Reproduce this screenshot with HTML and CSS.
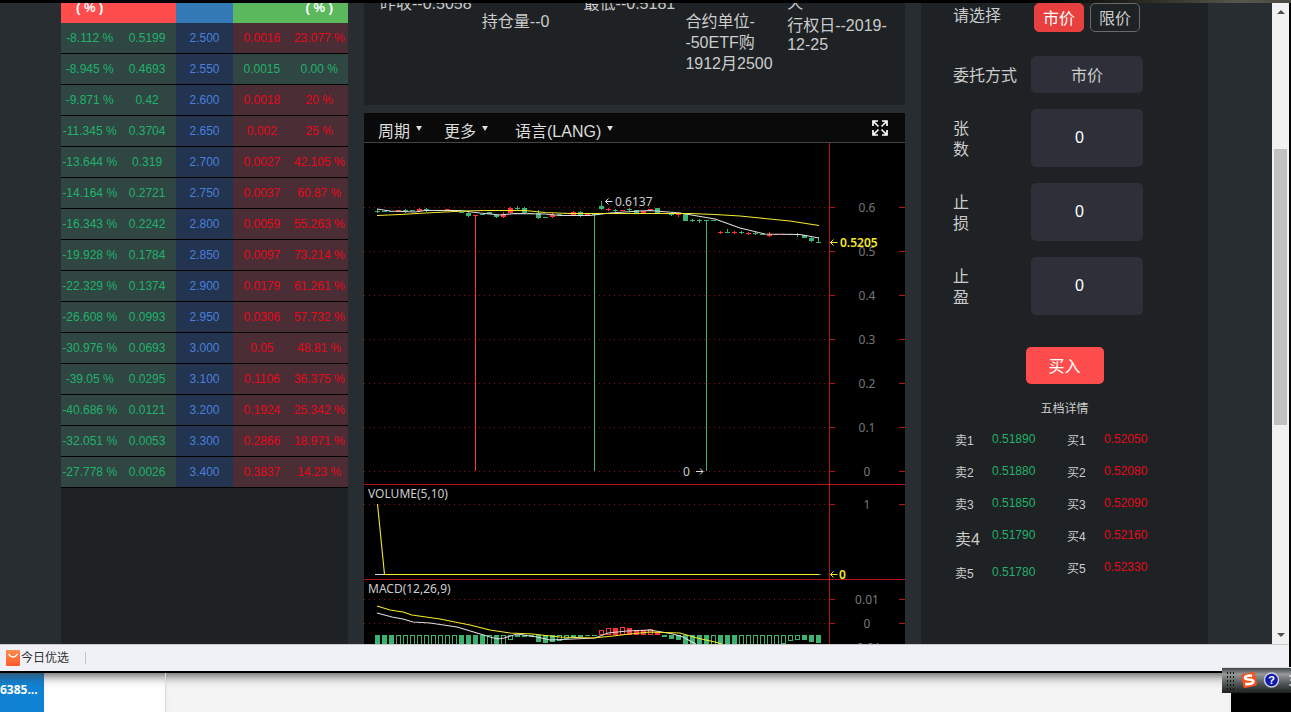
FILE: index.html
```html
<!DOCTYPE html>
<html lang="zh-CN">
<head>
<meta charset="utf-8">
<title>50ETF 期权</title>
<link rel="stylesheet" href="styles.css">
</head>
<body>
<div class="edge"></div>
<div class="window">
  <div class="viewport">
    <main class="page">
      <section class="panel">
        <table class="options">
          <thead><tr><th class="call">( % )</th><th class="call"></th><th class="strike"></th><th class="put"></th><th class="put">( % )</th></tr></thead>
          <tbody id="options"></tbody>
        </table>
      </section>

      <div class="center">
        <section class="panel quote">
          <div class="quote-col high">昨收--0.5058</div>
          <div class="quote-col">持仓量--0</div>
          <div class="quote-col high">最低--0.5181</div>
          <div class="quote-col">合约单位-<br>-50ETF购<br>1912月2500</div>
          <div class="quote-col expiry"><span>天</span><span>行权日--2019-<br>12-25</span></div>
        </section>
        <section class="chart">
          <div class="toolbar">
            <button type="button">周期<i class="caret"></i></button>
            <button type="button">更多<i class="caret"></i></button>
            <button type="button">语言(LANG)<i class="caret"></i></button>
            <button type="button" class="expand" aria-label="全屏">
              <svg viewBox="0 0 16 16" width="16" height="16"><path d="M1 6V1h5M10 1h5v5M1 10v5h5M10 15h5v-5M1.500 1.500l5 5M14.500 1.500l-5 5M1.500 14.500l5-5M14.500 14.500l-5-5" fill="none" stroke="#fff" stroke-width="1.700"/></svg>
            </button>
          </div>
          <svg class="plot" id="plot" viewBox="364 143 541 501"></svg>
        </section>
      </div>

      <form class="panel order">
        <div class="field first">
          <span class="name">请选择</span>
          <div class="modes"><button type="button" class="mode active">市价</button><button type="button" class="mode">限价</button></div>
        </div>
        <div class="field"><label class="name" for="way">委托方式</label><select class="box" id="way"><option>市价</option></select></div>
        <div class="field"><label class="name" for="qty">张<br>数</label><input class="box tall" id="qty" type="text" value="0"></div>
        <div class="field"><label class="name" for="stop">止<br>损</label><input class="box tall" id="stop" type="text" value="0"></div>
        <div class="field"><label class="name" for="gain">止<br>盈</label><input class="box tall" id="gain" type="text" value="0"></div>
        <button type="button" class="buy">买入</button>
        <div class="depth-title">五档详情</div>
        <div class="depth">
          <ul class="sell">
            <li><span>卖1</span><b>0.51890</b></li><li><span>卖2</span><b>0.51880</b></li><li><span>卖3</span><b>0.51850</b></li><li class="big"><span>卖4</span><b>0.51790</b></li><li><span>卖5</span><b>0.51780</b></li>
          </ul>
          <ul class="bid">
            <li><span>买1</span><b>0.52050</b></li><li><span>买2</span><b>0.52080</b></li><li><span>买3</span><b>0.52090</b></li><li><span>买4</span><b>0.52160</b></li><li><span>买5</span><b>0.52330</b></li>
          </ul>
        </div>
      </form>
    </main>
    <div class="scrollbar">
      <i class="arrow up"></i><div class="track"><div class="thumb"></div></div><i class="arrow down"></i>
    </div>
  </div>
  <footer class="status">
    <svg width="14" height="16" viewBox="0 0 14 16"><defs><linearGradient id="bag" x2="0" y2="1"><stop stop-color="#ff8a4c"/><stop offset="1" stop-color="#ff5a2a"/></linearGradient></defs><rect width="14" height="16" rx="1" fill="url(#bag)"/><path d="M2.500 4Q7 10 11.500 4" fill="none" stroke="#fff" stroke-width="1.300"/></svg>
    <a href="#">今日优选</a><i class="divider"></i>
  </footer>
</div>
<div class="desktop">
  <div class="task">6385...</div><div class="blank"></div><div class="rest"></div><div class="dark"></div>
</div>
<div class="ime">
  <svg width="69" height="26" viewBox="0 0 69 26">
    <g id="grip" fill="#111"></g>
    <g transform="rotate(-12 27 12)"><rect x="20" y="5" width="14" height="14" rx="2" fill="#f4511e"/><path d="M31 8.500C27 7 23.500 7.500 23.500 9.500S31 11.500 31 14S26 16.500 22.500 15" fill="none" stroke="#fff" stroke-width="2.600"/></g>
    <circle cx="49.500" cy="12" r="7" fill="#1018b0" stroke="#c8ccd8" stroke-width="1.500"/>
    <text x="49.500" y="16" text-anchor="middle" class="help">?</text>
    <path d="M67 8h2M68 12h1M67 17h2" stroke="#fff"/>
  </svg>
</div>
<script src="app.js"></script>
</body>
</html>
```

FILE: styles.css
```css
* { box-sizing: border-box; }
body {
  margin: 0; height: 100vh; display: flex; flex-direction: column; overflow: hidden;
  background: #000; color: #ccc;
  font: 16px/21px "Liberation Sans", "Noto Sans CJK SC", sans-serif;
}
button, input, select { font: inherit; color: inherit; border: 0; padding: 0; margin: 0; background: none; }
.edge { height: 3px; flex: none; background: linear-gradient(90deg, #000 80%, #26261f 88%, #55564c 96%, #4a4a42); }
.window {
  flex: 1; min-height: 0; display: flex; flex-direction: column;
  border-right: 2px solid #000; border-bottom: 2px solid #000;
}
.viewport { flex: 1; min-height: 0; display: flex; overflow: hidden; background: #282d31; }
.page {
  flex: 1; min-width: 0; display: grid; grid-template-columns: 287fr 541fr 287fr; gap: 16px;
  padding: 0 64px 0 61px; overflow: hidden;
}
.panel { background: #1e2224; min-width: 0; overflow: hidden; }

.options { width: 100%; table-layout: fixed; border-spacing: 0; margin-top: -10px; font-size: 12px; line-height: 16px; }
.options th, .options td { padding: 0; text-align: center; white-space: nowrap; }
.options th { height: 30px; color: #fff; font-size: 13px; }
.options td { height: 31px; border-bottom: 1px solid #000; }
th.call { background: #ff4d4d; }
th.strike { background: #337ab7; }
th.put { background: #5cb85c; }
td.down { background: #304642; color: #21b16c; }
td.up { background: #4a2d35; color: #e6091b; }
td.strike { background: #22344f; color: #4b7fdd; }

.center { display: flex; flex-direction: column; gap: 8px; min-width: 0; min-height: 0; }
.quote { display: grid; grid-template-columns: repeat(5, 1fr); padding: 0 16px; height: 102px; flex: none; }
.quote-col { padding-top: 8px; white-space: nowrap; }
.quote-col.high { margin-top: -18px; }
.quote-col.expiry { margin-top: -18px; display: flex; flex-direction: column; gap: 4px; line-height: 19px; }
.chart { flex: 1; min-height: 0; display: flex; flex-direction: column; background: #000; overflow: hidden; }
.toolbar { flex: none; display: flex; gap: 22px; padding: 0 17px 0 14px; height: 30px; background: #0a0a0a; border-bottom: 1px solid #444; color: #ddd; }
.toolbar button { display: flex; align-items: center; gap: 6px; padding-top: 8px; }
.toolbar button:nth-child(3) { margin-left: 5px; }
.toolbar .expand { margin-left: auto; padding: 0; }
.caret { border: 3px solid transparent; border-top: 5px solid #ddd; border-bottom: 0; margin-bottom: 6px; }
.plot { display: block; width: 100%; flex: none; font: 12px "Noto Sans", sans-serif; }
.plot text { fill: #ccc; }
.plot .scale { fill: #777; text-anchor: middle; }
.plot .mark { fill: #f4e92c; font-weight: 600; }

.order { padding: 0 32px; display: flex; flex-direction: column; gap: 16px; }
.field { display: flex; align-items: center; }
.field.first { align-items: flex-start; margin-bottom: 8px; }
.name { width: 78px; flex: none; padding-top: 2px; }
.modes { display: flex; gap: 6px; padding-left: 3px; }
.mode { width: 50px; height: 29px; border: 1px solid #666b6e; border-radius: 5px; padding-top: 2px; }
.mode.active { background: #e8403f; border-color: #e8403f; color: #fff; }
.box { width: 112px; height: 37px; border-radius: 5px; background: #2d3039; text-align: center; }
select.box { appearance: none; text-align-last: center; padding-top: 2px; }
.box.tall { height: 58px; padding-right: 15px; color: #fff; }
.buy { align-self: center; width: 78px; height: 37px; margin-top: 16px; padding-top: 2px; border-radius: 5px; background: #ff4d4d; color: #fff; }
.depth-title { align-self: center; font-size: 12px; line-height: 18px; }
.depth { display: flex; gap: 30px; margin: -11px 0 0 2px; font-size: 12px; }
.depth ul { list-style: none; margin: 0; padding: 0; }
.depth li { display: flex; height: 32px; line-height: 32px; }
.depth li span { width: 37px; line-height: 37px; }
.depth b { font-weight: 400; }
.depth .big { height: 37px; }
.depth .big span { font-size: 16px; line-height: 42px; }
.sell { width: 82px; }
.sell b { color: #21b16c; }
.bid b { color: #e6091b; }

.scrollbar { width: 17px; flex: none; display: flex; flex-direction: column; align-items: center; background: #f1f1f1; }
.arrow { border: 4px solid transparent; margin: 7px 0; }
.arrow.up { border-top: 0; border-bottom-color: #505050; }
.arrow.down { border-bottom: 0; border-top-color: #505050; }
.track { flex: 1; width: 13px; display: flex; flex-direction: column; }
.track::before { content: ""; flex: 128; }
.track::after { content: ""; flex: 201; }
.thumb { flex: 276; background: #c1c1c1; }

.status { flex: none; height: 27px; display: flex; align-items: center; gap: 1px; padding-left: 6px; background: #f0f1f6; border-top: 1px solid #c8c8c8; font-size: 12px; }
.status a { color: #333; text-decoration: none; padding-top: 1px; }
.divider { width: 1px; height: 12px; margin-left: 15px; background: #c4c4c8; }
.desktop { height: 39px; flex: none; display: grid; grid-template-columns: 44px 121px 1fr 60px; }
.desktop > div { box-shadow: inset 0 12px 12px -10px #444; }
.desktop .task { background: #1082d4; color: #fff; font: bold 12px/34px "Open Sans", sans-serif; white-space: nowrap; }
.desktop .blank { background: #fff; }
.desktop .rest { background: #f4f4f4; border-left: 1px solid #ddd; }
.desktop .dark { background: #000; box-shadow: none; }
.ime { position: absolute; right: 0; bottom: 19px; width: 69px; height: 26px; border-top: 1px solid #ddd; background: linear-gradient(#3d4343, #969999 25%, #555a5a 60%, #1c1f1f); overflow: hidden; }
.ime svg { display: block; }
.help { fill: #fff; font: bold 11px "Liberation Sans", sans-serif; }
```

FILE: app.js
```js
const rows = [
  ["-8.112 %","0.5199","2.500","0.0016","23.077 %"],
  ["-8.945 %","0.4693","2.550","0.0015","0.00 %"],
  ["-9.871 %","0.42","2.600","0.0018","20 %"],
  ["-11.345 %","0.3704","2.650","0.002","25 %"],
  ["-13.644 %","0.319","2.700","0.0027","42.105 %"],
  ["-14.164 %","0.2721","2.750","0.0037","60.87 %"],
  ["-16.343 %","0.2242","2.800","0.0059","55.263 %"],
  ["-19.928 %","0.1784","2.850","0.0097","73.214 %"],
  ["-22.329 %","0.1374","2.900","0.0179","61.261 %"],
  ["-26.608 %","0.0993","2.950","0.0306","57.732 %"],
  ["-30.976 %","0.0693","3.000","0.05","48.81 %"],
  ["-39.05 %","0.0295","3.100","0.1106","36.375 %"],
  ["-40.686 %","0.0121","3.200","0.1924","25.342 %"],
  ["-32.051 %","0.0053","3.300","0.2866","18.971 %"],
  ["-27.778 %","0.0026","3.400","0.3837","14.23 %"]
];
document.getElementById("options").innerHTML = rows.map(r => {
  const put = r[4] === "0.00 %" ? "down" : "up";
  const kinds = ["down", "down", "strike", put, put];
  return "<tr>" + r.map((v, i) => `<td class="${kinds[i]}">${v}</td>`).join("") + "</tr>";
}).join("");

const RED = "#ff3232", GREEN = "#3cb371", AXIS = "#b41414", WHITE = "#ddd", YELLOW = "#f4e92c";
let out = "";
const line = (x1, y1, x2, y2, c, extra = "") => { out += `<path d="M${x1} ${y1}L${x2} ${y2}" stroke="${c}" fill="none" ${extra}/>`; };
const rect = (x, y, w, h, c) => { out += `<rect x="${x}" y="${y}" width="${w}" height="${h}" fill="${c}"/>`; };
const curve = (pts, c) => { out += `<polyline points="${pts}" fill="none" stroke="${c}" stroke-width="1.1"/>`; };

/* grid, axis and scale labels */
[[207,"0.6"],[251,"0.5"],[295,"0.4"],[339,"0.3"],[383,"0.2"],[427,"0.1"],[471,"0"],[504,"1"],[599,"0.01"],[623,"0"],[647,"-0.01"]].forEach(([y, t]) => {
  line(364, y + .5, 829, y + .5, "#8c1010", 'stroke-dasharray="1 4"');
  line(829, y + .5, 835, y + .5, AXIS);
  line(899, y + .5, 905, y + .5, AXIS);
  out += `<text class="scale" x="867" y="${y + 5}">${t}</text>`;
});
line(829.5, 143, 829.5, 644, AXIS);
line(364, 484.5, 905, 484.5, AXIS);
line(364, 579.5, 905, 579.5, AXIS);

/* candles: colour, body top, body bottom, wick top, wick bottom */
const candles = [
  "g 211 212 209 213","g 211 212","g 211 212","r 210 212","g 210 211 209 213","g 210 211","r 209 211 208 212","g 209 210 208 212",
  "g 210 211","r 210 211","r 209 210","g 211 212","g 212 213","g 213 216 211 217","r 215 216 215 471","g 214 215","g 212 214","g 215 217 214 218",
  "r 214 217 212 218","r 208 213 207 214","g 208 209 206 211","g 208 213 207 213","g 213 214","g 213 218 210 219","g 217 218","r 215 217 213 218",
  "g 214 215","g 213 214","r 212 215 211 216","g 212 216 211 217","r 214 216","g 214 215 214 471","g 206 209 201 210","r 209 210 208 211",
  "g 210 211 209 212","r 210 211","g 209 210 208 212","g 210 213","r 211 213","r 209 210","g 208 213","g 213 214","g 214 215 213 216",
  "r 214 215 213 217","g 214 221","g 220 221 219 222","g 220 221 219 223","g 220 221 220 471","g 220 221","r 232 233 231 234","g 232 233 229 233",
  "r 232 233 231 234","g 232 233 231 234","r 233 234 232 235","g 233 234 232 235","g 234 235","r 234 236 232 237","r 234 235","r 234 235","g 234 235",
  "g 234 235 233 237","g 235 238","g 238 241 237 242","g 242 243 237 243"
];
candles.forEach((s, i) => {
  const [k, a, b, c, d] = s.split(" "), color = k === "r" ? RED : GREEN, x = 375 + 7 * i;
  rect(x, +a, 5, b - a, color);
  if (c) rect(x + 2, +c, 1, d - c, color);
});
curve("377,209 390,211 415,212 425,210.500 460,210.500 480,213 500,215 515,213.500 545,214 560,215.500 590,215.500 610,213 640,211 650,210.500 680,213 715,219 740,228 765,234 800,234.500 819,238", WHITE);
curve("377,215.500 400,214.500 425,213 465,211 485,210.500 525,210.500 545,212.500 570,213.500 690,213.500 715,214.500 740,216 760,218 790,221 819,225.500", YELLOW);

/* price and volume marks */
const arrow = (x, y, c, dir) => { out += `<path d="M${x} ${y}h${7 * dir}M${x} ${y}l${3 * dir} -3M${x} ${y}l${3 * dir} 3" fill="none" stroke="${c}"/>`; };
arrow(605.5, 201.5, WHITE, 1);
out += '<text x="615" y="206">0.6137</text>';
arrow(830.5, 242.5, YELLOW, 1);
out += '<text class="mark" x="840" y="247">0.5205</text>';
arrow(703, 471.5, WHITE, -1);
out += '<text x="683" y="476">0</text>';
arrow(830.5, 574.5, YELLOW, 1);
out += '<text class="mark" x="839" y="579">0</text><text x="368" y="498">VOLUME(5,10)</text><text x="368" y="593">MACD(12,26,9)</text>';
line(375, 574.5, 384, 574.5, WHITE);
curve("377.500,504 384.500,574.500 819,574.500", YELLOW);
line(819, 574.5, 821, 574.5, GREEN);

/* MACD histogram: index range, filled flag, top, bottom */
[[0,2,1,635,646],[3,11,0,635,646],[12,15,1,635,646],[16,16,0,635,646],[17,17,1,635,646],[18,18,0,635,646],[19,19,0,635,640],[20,22,1,635,637],
 [23,23,1,635,642],[24,24,1,635,643],[25,25,1,635,642],[26,26,0,635,641],[27,27,0,635,639],[28,28,1,635,638],[29,29,1,635,637],[30,31,1,635,636],
 [32,32,0,630,635],[33,33,0,628,635],[34,34,1,628,635],[35,35,0,627,635],[36,36,1,628,635],[37,38,1,630,635],[39,39,0,629,635],[40,40,1,632,635],
 [41,41,1,635,637],[42,42,1,635,639],[43,43,1,635,640],[44,47,1,635,646],[48,48,0,635,646],[49,51,1,635,646],[52,57,0,635,646],[58,58,0,635,644],
 [59,59,0,635,641],[60,60,0,635,640],[61,61,1,635,640],[62,62,1,635,642],[63,63,1,635,643]].forEach(([from, to, full, top, bottom]) => {
  for (let i = from; i <= to; i++) {
    const x = 375 + 7 * i, c = i > 31 && i < 41 ? RED : GREEN;
    if (full) rect(x, top, 5, bottom - top, c);
    else out += `<rect x="${x + .5}" y="${top + .5}" width="4" height="${bottom - top - 1}" fill="none" stroke="${c}"/>`;
  }
});
curve("377,613 392,617 403,619 413,622 430,623 457,627 477,633 490,637 498,639 504,638 517,634 537,637 550,640 573,639 595,638 608,633 627,631 650,630 673,634 683,637 692,642 696,644", WHITE);
curve("377,606 390,610 403,612 412,615 440,619 470,625 490,630 510,633 533,634 550,636 560,637 593,638 613,636 630,634 650,632 680,633 697,638 715,642 722,644", YELLOW);
document.getElementById("plot").innerHTML = out;

let dots = "";
for (let r = 0; r < 5; r++) for (let c = 0; c < 3; c++) dots += `<rect x="${5 + c * 3}" y="${4 + r * 4}" width="1" height="2"/>`;
document.getElementById("grip").innerHTML = dots;
```
